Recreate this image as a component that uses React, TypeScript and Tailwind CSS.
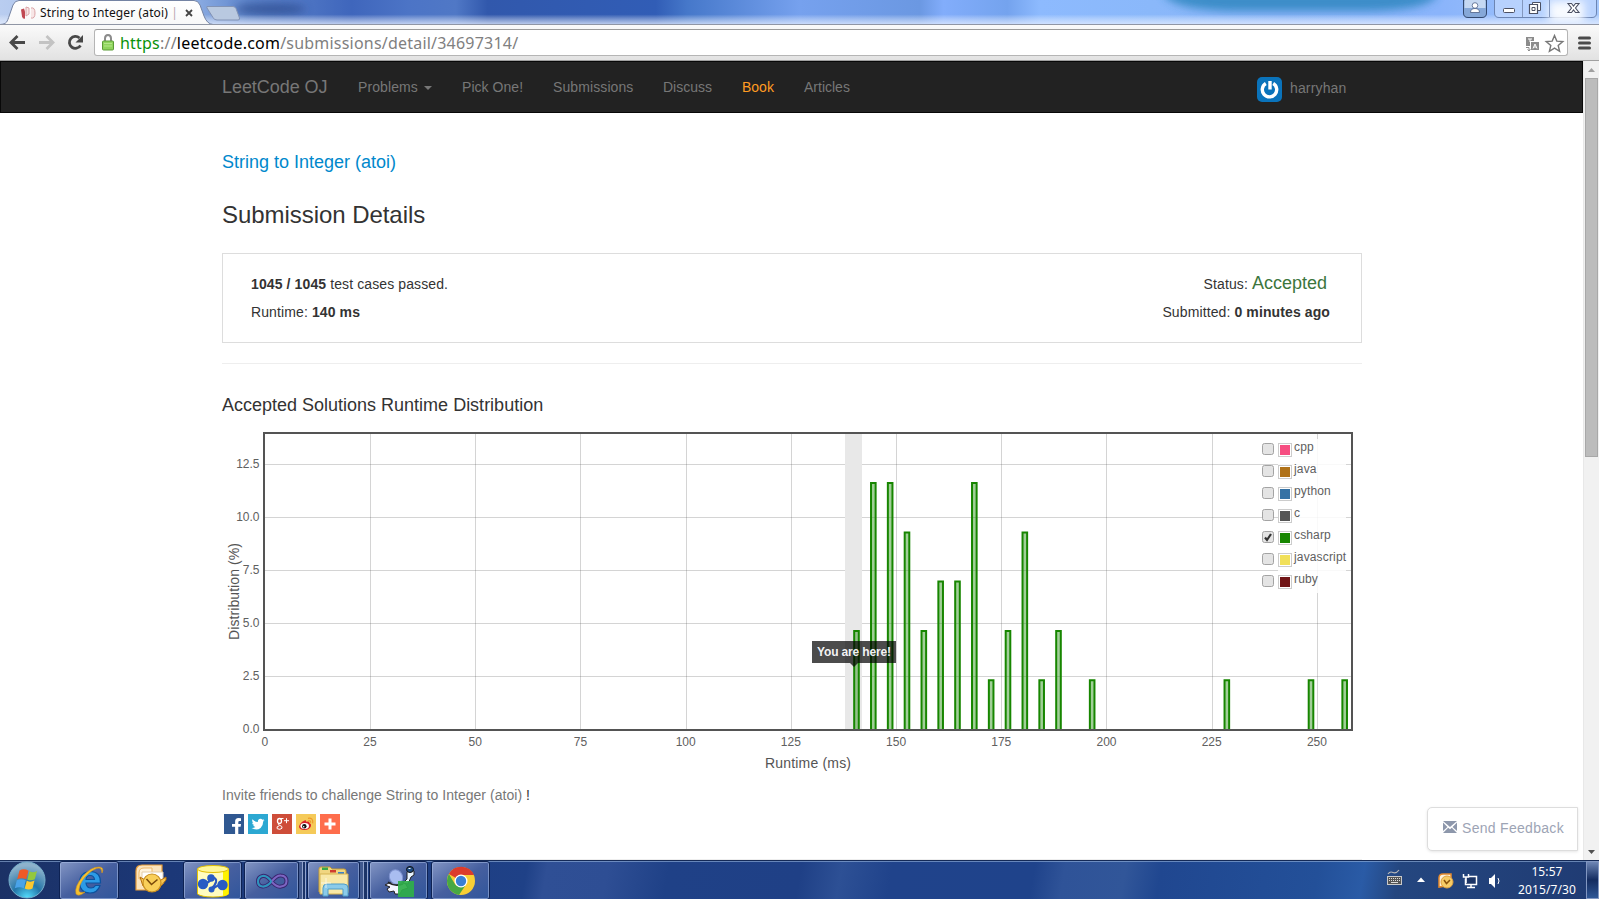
import React from 'react';

type Bar = [number, number];

const bars: Bar[] = [
  [140, 4.65], [144, 11.63], [148, 11.63], [152, 9.3], [156, 4.65], [160, 6.98], [164, 6.98],
  [168, 11.63], [172, 2.33], [176, 4.65], [180, 9.3], [184, 2.33], [188, 4.65], [196, 2.33],
  [228, 2.33], [248, 2.33], [256, 2.33],
];

const languages = [
  { name: 'cpp', color: '#f64e81' },
  { name: 'java', color: '#b07219' },
  { name: 'python', color: '#3572a5' },
  { name: 'c', color: '#555555' },
  { name: 'csharp', color: '#178600', checked: true },
  { name: 'javascript', color: '#f1e05a' },
  { name: 'ruby', color: '#701516' },
];

const xOf = (v: number) => 265.2 + v * 4.2085;
const yOf = (v: number) => 729.5 - v * 21.2;

function TabStrip() {
  return (
    <div className="relative h-6 w-full overflow-hidden bg-[#6f9be8]">
      <svg className="block" width="1599" height="24" viewBox="0 0 1599 24">
        <defs>
          <linearGradient id="glass" x1="0" x2="1" y1="0" y2="0">
            <stop offset="0" stopColor="#b9cdf0" />
            <stop offset="0.12" stopColor="#8fafe4" />
            <stop offset="0.155" stopColor="#5f86cc" />
            <stop offset="0.22" stopColor="#3f66bc" />
            <stop offset="0.255" stopColor="#4c74c6" />
            <stop offset="0.285" stopColor="#5078c6" />
            <stop offset="0.305" stopColor="#3158ac" />
            <stop offset="0.41" stopColor="#315db6" />
            <stop offset="0.43" stopColor="#4678ca" />
            <stop offset="0.5" stopColor="#76a1ee" />
            <stop offset="0.575" stopColor="#6b98e2" />
            <stop offset="0.59" stopColor="#82adfb" />
            <stop offset="0.63" stopColor="#74a3ee" />
            <stop offset="0.65" stopColor="#8dbafe" />
            <stop offset="0.72" stopColor="#8ab8fa" />
            <stop offset="0.8" stopColor="#88b2f8" />
            <stop offset="0.9" stopColor="#8ab4fb" />
            <stop offset="1" stopColor="#a6c8fc" />
          </linearGradient>
          <linearGradient id="haze" x1="0" x2="0" y1="0" y2="1">
            <stop offset="0.6" stopColor="#fff" stopOpacity="0" />
            <stop offset="1" stopColor="#e4edff" stopOpacity="0.75" />
          </linearGradient>
          <linearGradient id="tab" x1="0" x2="0" y1="0" y2="1">
            <stop offset="0" stopColor="#fff" />
            <stop offset="1" stopColor="#f8f8f8" />
          </linearGradient>
          <filter id="soft" x="-20%" y="-60%" width="140%" height="220%"><feGaussianBlur stdDeviation="4" /></filter>
        </defs>
        <rect width="1599" height="24" fill="url(#glass)" />
        <ellipse cx="270" cy="9" rx="36" ry="6" fill="#2c4a8c" opacity="0.7" filter="url(#soft)" />
        <path d="M1162 -8H1438Q1436 12 1350 11H1250Q1170 12 1162 -8Z" fill="#2f86c0" opacity="0.85" filter="url(#soft)" />
        <rect width="1599" height="24" fill="url(#haze)" />
        <path d="M207 6.500H233q2 0 3 2l3.500 9.500q.5 2-1.500 2H217q-3 0-4-2.500L207 8q-.5-1.500 0-1.500Z" fill="#b9c9e0" stroke="#8293b5" />
        <path d="M0 24.500C7 24 7 22 9.500 15L13 5Q15 .5 19 .5H194Q198 .5 200 5L204 16Q207 24 213 24.500Z" fill="url(#tab)" stroke="#7483a3" />
        <path d="M21 9.500l3-1 1 3v7q-2 1-3-2z" fill="#c14852" />
        <path d="M26 7l3 1v6l-3 2zM31 8q4-1 4 5t-4 5" fill="#f7e6e6" stroke="#dba4a8" />
        <path d="M186 10l6 6M192 10l-6 6" stroke="#444" strokeWidth="1.800" />
        {/* profile and window buttons */}
        <path d="M1463.500 0v13q0 4.500 4.500 4.500h14q4.500 0 4.500-4.500V0Z" fill="#86a8d8" stroke="#33496f" />
        <path d="M1464.500 0v8h21V0Z" fill="#c5d8f2" />
        <circle cx="1475" cy="5.500" r="2.800" fill="#fff" stroke="#4b5f86" strokeWidth=".8" />
        <path d="M1470.500 12.500q0-4 4.500-4t4.500 4z" fill="#fff" stroke="#4b5f86" strokeWidth=".8" />
        <path d="M1494.500 0v13q0 4.500 4.500 4.500h93q4.500 0 4.500-4.500V0" fill="#c4daff" fillOpacity=".7" stroke="#6c85b3" />
        <rect x="1549" y="1" width="35" height="21" fill="#fff" opacity=".9" filter="url(#soft)" />
        <path d="M1522.500 0v17M1549.500 0v17" stroke="#8397bd" />
        <rect x="1503.500" y="8.500" width="11" height="4" rx="1" fill="#fff" stroke="#4b5063" />
        <path d="M1532.500 2.500h8v8h-8z" fill="#fff" stroke="#4b5063" />
        <path d="M1529.500 4.500h8v9h-8z" fill="#fff" stroke="#4b5063" strokeWidth="1.200" />
        <path d="M1532 7.500h3v3h-3z" fill="none" stroke="#4b5063" />
        <path d="M1568 3.500h3.500l2 2.500 2-2.500h3.500l-3.500 4.500 3.500 4.500h-3.500l-2-2.500-2 2.500H1568l3.500-4.500z" fill="#fff" stroke="#4b5063" strokeWidth="1.100" />
      </svg>
      <span className="absolute left-10 top-[4px] whitespace-nowrap font-['Noto_Sans'] text-[12px] leading-[18px] tracking-[0.12px] text-[#111]">
        String to Integer (atoi) <span className="text-[#b9a3b0]">|</span>
      </span>
    </div>
  );
}

function Toolbar() {
  return (
    <div className="flex h-[37px] items-center border-b border-t border-b-[#a0a0a0] border-t-[#9096a5] bg-gradient-to-b from-[#fafafa] to-[#e2e2e2]">
      <svg className="shrink-0" width="94" height="35" viewBox="0 25 94 35">
        <path d="M25 42.500H11.500M17.500 36l-6.500 6.500 6.500 6.500" fill="none" stroke="#484848" strokeWidth="2.800" />
        <path d="M39 42.500h13.500M46.500 36l6.500 6.500-6.500 6.500" fill="none" stroke="#c3c3c3" strokeWidth="2.800" />
        <path d="M80.500 45.500A6 6 0 1 1 79.500 38" fill="none" stroke="#484848" strokeWidth="2.800" />
        <path d="M83 35v7.500h-7.500z" fill="#484848" />
      </svg>
      <div className="flex h-[27px] w-[1474px] items-center rounded-[3px] border border-[#b5b5b5] border-t-[#9b9b9b] bg-white pr-[2px]">
        <svg className="ml-[6px] shrink-0" width="14" height="19" viewBox="0 0 14 19">
          <path d="M4 9V5.500Q4 2 7 2t3 3.500V9" fill="none" stroke="#8b8b8b" strokeWidth="2" />
          <rect x="1.500" y="8" width="11" height="9" rx="1" fill="#8ed45c" stroke="#5a9b37" />
          <path d="M3 10.500h8M3 13h8" stroke="#b3e68a" />
        </svg>
        <span className="ml-[5px] flex-1 whitespace-nowrap font-['Noto_Sans'] text-[16px] leading-6 tracking-[0.21px] text-[#808080]">
          <span className="text-[#0a920a]">https</span>://<span className="text-black">leetcode.com</span>/submissions/detail/34697314/
        </span>
        <svg className="shrink-0" width="42" height="24" viewBox="1523 30 42 24">
          <path d="M1526 36h8v4h-4v5h-4z" fill="#8b8b8b" />
          <path d="M1528 38h4M1530 38v3" stroke="#fff" />
          <rect x="1531" y="41" width="8" height="8" fill="#8b8b8b" />
          <path d="M1533 47.500l2-4.500 2 4.500M1534 46h2" fill="none" stroke="#fff" />
          <path d="M1526 46.500h3v3M1527.500 48.500l1.500 1.500 1.500-2" fill="none" stroke="#8b8b8b" />
          <path d="M1554.500 34.500l2.300 5.600 6 .4-4.600 3.900 1.400 5.900-5.100-3.200-5.100 3.200 1.400-5.900-4.600-3.900 6-.4z" fill="#fff" stroke="#777" strokeWidth="1.400" />
        </svg>
      </div>
      <svg className="ml-[9px]" width="16" height="16" viewBox="0 0 16 16">
        <path d="M2.500 3h10M2.500 8h10M2.500 13h10" stroke="#4a4a4a" strokeWidth="3" strokeLinecap="round" />
      </svg>
    </div>
  );
}

function NavBar() {
  return (
    <nav className="flex h-[52px] items-center border border-[#080808] bg-[#222] pl-[221px] text-[14px] leading-5 text-[#777]">
      <span className="w-[136px] text-[18px] tracking-[-0.06px]">LeetCode OJ</span>
      <span className="flex w-[104px] items-center tracking-[0.1px]">
        Problems
        <svg className="ml-[6px] mt-px" width="8" height="4" viewBox="0 0 8 4"><path d="M0 0h8L4 4z" fill="#777" /></svg>
      </span>
      <span className="w-[91px] tracking-[0.05px]">Pick One!</span>
      <span className="w-[110px] tracking-[0.1px]">Submissions</span>
      <span className="w-[79px]">Discuss</span>
      <span className="w-[62px] text-[#ff9b22]">Book</span>
      <span className="w-[453px]">Articles</span>
      <svg className="mt-[4px]" width="25" height="25" viewBox="0 0 25 25">
        <rect width="25" height="25" rx="5" fill="#0a73bb" />
        <path d="M8.800 6.500A7.200 7.200 0 1 0 16.200 6.500" fill="none" stroke="#fff" strokeWidth="3.400" />
        <path d="M13 4v8.500" stroke="#fff" strokeWidth="3.400" />
      </svg>
      <span className="ml-2 mt-[2px] tracking-[0.15px]">harryhan</span>
    </nav>
  );
}

function Chart() {
  const vertical = [25, 50, 75, 100, 125, 150, 175, 200, 225, 250];
  const horizontal = [2.5, 5, 7.5, 10, 12.5];
  return (
    <svg className="block font-['Liberation_Sans']" width="1140" height="355" viewBox="222 424 1140 355">
      {vertical.map((v) => (
        <path key={v} d={`M${Math.floor(xOf(v)) + 0.5} 434V729`} stroke="#545454" strokeOpacity="0.25" />
      ))}
      {horizontal.map((v) => (
        <path key={v} d={`M265 ${yOf(v)}H1351`} stroke="#545454" strokeOpacity="0.25" />
      ))}
      <rect x="845" y="434" width="17" height="295" fill="#e8e8e8" />
      {bars.map(([ms, pct]) => (
        <path
          key={ms}
          d={`M${xOf(ms) - 0.2} 729V${yOf(pct) + 0.1}h4.600V729`}
          fill="#178600"
          fillOpacity="0.4"
          stroke="#178600"
          strokeWidth="2"
        />
      ))}
      <rect x="264" y="433" width="1088" height="297" fill="none" stroke="#545454" strokeWidth="2" />
      <rect x="1278" y="439" width="68" height="154" fill="#fff" fillOpacity="0.85" />
      <g fill="#606060" fontSize="12">
        {horizontal.concat(0).map((v) => (
          <text key={v} x="259.5" y={yOf(v) + 3.5} textAnchor="end">{v.toFixed(1)}</text>
        ))}
        {[0, ...vertical].map((v) => (
          <text key={v} x={xOf(v) - 0.4} y="746" textAnchor="middle">{v}</text>
        ))}
        <text x="808" y="768" fill="#545454" fontSize="14" textAnchor="middle" textLength="86">Runtime (ms)</text>
        <text transform="translate(239 591.500) rotate(-90)" fill="#545454" fontSize="14" textAnchor="middle" textLength="97">Distribution (%)</text>
        {languages.map((l, i) => {
          const y = 443 + i * 22;
          return (
            <g key={l.name}>
              <rect x="1262.500" y={y + 0.5} width="11" height="11" rx="2" fill="#e4e4e4" stroke="#a3a3a3" />
              {l.checked && <path d={`M1265 ${y + 6.5}l2 2.500 4-6`} fill="none" stroke="#333" strokeWidth="2.200" />}
              <rect x="1278.500" y={y + 0.5} width="13" height="13" fill="#fff" stroke="#ccc" />
              <rect x="1280" y={y + 2} width="10" height="10" fill={l.color} />
              <text x="1294" y={y + 8} letterSpacing="0.15">{l.name}</text>
            </g>
          );
        })}
      </g>
      <path d="M812 641H896V663H858L854 667L850 663H812Z" fill="#000" fillOpacity="0.7" />
      <text x="817" y="656" fill="#fff" fillOpacity=".95" fontSize="12" fontWeight="bold" textLength="74">You are here!</text>
    </svg>
  );
}

function ShareIcons() {
  return (
    <div className="mt-[9px] flex gap-1 pl-[2px]">
      <svg width="20" height="20" viewBox="0 0 20 20">
        <rect width="20" height="20" fill="#305891" />
        <path d="M17 4.200V7h-1.500q-1.200 0-1.200 1.200V10H17l-.4 2.800h-2.300V20h-3.200v-7.200H8V10h3.100V7.700Q11.100 4 14.500 4q1.500 0 2.500.2z" fill="#fff" />
      </svg>
      <svg width="20" height="20" viewBox="0 0 20 20">
        <rect width="20" height="20" fill="#2ca8d2" />
        <path d="M16.500 6.100q-.7.300-1.500.4.800-.5 1.100-1.400-.8.500-1.600.6a2.600 2.600 0 0 0-4.500 2.400Q6.600 7.800 4.500 5.300q-1 2.200.8 3.500-.6 0-1.200-.3 0 2 2.100 2.600-.6.100-1.200 0 .5 1.600 2.400 1.800Q5.700 14.200 3.500 14q5 2.900 9.100-.1 2.600-2.200 2.600-6.300.8-.6 1.300-1.500z" fill="#fff" />
      </svg>
      <svg width="20" height="20" viewBox="0 0 20 20">
        <rect width="20" height="20" fill="#ce4d39" />
        <ellipse cx="7.500" cy="7" rx="2" ry="2.500" fill="none" stroke="#fff" strokeWidth="1.300" />
        <path d="M8 4.500h3.500M7.200 9.500q-1.700 1 .2 1.700 3.400.9 2.600 3-1.800 2-4.800.5-1.200-2.200 2.200-3M12 6.700h5M14.500 4.200v5" fill="none" stroke="#fff" strokeWidth="1" />
      </svg>
      <svg width="20" height="20" viewBox="0 0 20 20">
        <rect width="20" height="20" fill="#f5ca59" />
        <path d="M8.500 6.500q2-.6 1.600 1.200 4-1 3.300 1.400 2.200.9 1.600 3-1.300 3.900-6.600 3.900-5.200-.2-5.400-3.300.6-3.800 5.500-6.200z" fill="#d82028" />
        <ellipse cx="8.700" cy="12" rx="4.300" ry="3" fill="#fff" />
        <circle cx="8.300" cy="12.200" r="2.200" fill="#111" /><circle cx="7.700" cy="12.700" r=".8" fill="#fff" />
        <path d="M12 4.300q5.500-.7 4.700 5M12.300 6.600q2.600-.3 2.300 2.200" fill="none" stroke="#ee9a2b" strokeWidth="1.200" />
      </svg>
      <svg width="20" height="20" viewBox="0 0 20 20">
        <rect width="20" height="20" fill="#fe6d4c" />
        <path d="M10 4.500v11M4.500 10h11" stroke="#fff" strokeWidth="3" />
      </svg>
    </div>
  );
}

function PageBody() {
  return (
    <main className="ml-[222px] flex w-[1140px] flex-col text-[14px] leading-5 text-[#333]">
      <h4 className="mt-[39px] text-[18px] leading-5 text-[#0088cc]">String to Integer (atoi)</h4>
      <h3 className="mt-[29px] text-[24px] leading-[28px] tracking-[-0.05px]">Submission Details</h3>
      <section className="mt-[24px] flex h-[90px] justify-between border border-[#ddd] pl-7 pr-[31px] pt-[16px] leading-7 tracking-[0.11px]">
        <div>
          <p><b>1045 / 1045</b> test cases passed.</p>
          <p>Runtime: <b>140 ms</b></p>
        </div>
        <div className="text-right">
          <p className="mr-[3px] mt-[-1px] flex h-[29px] items-baseline justify-end">Status:&nbsp;<span className="text-[18px] tracking-normal text-[#3c763d]">Accepted</span></p>
          <p>Submitted: <b>0 minutes ago</b></p>
        </div>
      </section>
      <hr className="mt-5 border-[#eee]" />
      <h4 className="mb-[9px] mt-[31px] text-[18px] leading-5">Accepted Solutions Runtime Distribution</h4>
      <Chart />
      <p className="mt-[6px] tracking-[0.04px] text-[#777]">Invite friends to challenge String to Integer (atoi) <span className="text-[#333]">!</span></p>
      <ShareIcons />
      <hr className="mt-[25px] border-[#eee]" />
    </main>
  );
}

function ScrollBar() {
  return (
    <div className="flex w-4 flex-col items-center border-l border-[#e8e8e8] bg-[#f1f1f1]">
      <svg width="15" height="17" viewBox="0 0 15 17"><path d="M4 11h7L7.500 7z" fill="#a0a0a0" /></svg>
      <div className="h-[379px] w-[13px] border border-[#a8a8a8] bg-[#bcbcbc]" />
      <div className="flex-1" />
      <svg width="15" height="17" viewBox="0 0 15 17"><path d="M4 7h7l-3.500 4z" fill="#505050" /></svg>
    </div>
  );
}

function TaskButton({ className, children }: { className: string; children: React.ReactNode }) {
  return (
    <div className={`flex h-[39px] shrink-0 items-center justify-center rounded-[3px] border border-[#0e2253] bg-gradient-to-br from-[#8496c4] via-[#465f9f] to-[#30569c] shadow-[inset_0_0_0_1px_rgba(170,190,230,0.55)] ${className}`}>
      {children}
    </div>
  );
}

function OutlookIcon() {
  return (
    <svg width="32" height="30" viewBox="0 0 32 30">
      <path d="M1 26V7q0-6 6-6h20v18l-4 7z" fill="#fbe4bd" stroke="#e59a35" strokeWidth="1.200" />
      <path d="M4 15V9q0-5 5-5h8v7z" fill="#fff3dc" stroke="#f0b765" />
      <path d="M7 8h21v12H7z" fill="#fff" stroke="#e3cda9" />
      <path d="M5 13l5 3 8 6 8-6 5-3v3l-5 6H8z" fill="#f5c451" stroke="#b8720e" />
      <circle cx="17" cy="19" r="9" fill="#f9cf59" stroke="#c98f20" strokeWidth="1.200" />
      <path d="M11.500 15l5 5.500 6-5" fill="none" stroke="#7a4a0a" strokeWidth="1.600" />
    </svg>
  );
}

function TaskBar() {
  return (
    <footer className="relative flex h-[39px] items-start border-t border-[#142a57] bg-[linear-gradient(100deg,#1b3165_0,#1c3878_170px,#1f4187_520px,#2f4f95_540px,#2e4e94_600px,#1f4187_660px,#1f4086_790px,#2d5095_830px,#20438b_880px,#1f438b_1020px,#2f5398_1050px,#315699_1110px,#204790_1145px,#235099_1300px,#2a5ba6_1345px,#24467f_1380px,#1f3a72_1599px)] font-['Noto_Sans'] text-white shadow-[inset_0_1px_0_rgba(150,180,220,0.6)]">
      <svg className="ml-[7px] shrink-0" width="40" height="38" viewBox="7 861 40 38">
        <defs>
          <radialGradient id="orb" cx=".5" cy="1" r=".9"><stop offset="0" stopColor="#55e0ff" /><stop offset=".45" stopColor="#2375a8" /><stop offset="1" stopColor="#8db2cc" /></radialGradient>
        </defs>
        <circle cx="27" cy="880" r="18" fill="url(#orb)" stroke="#75aecb" />
        <path d="M19.500 870.500q4.500-2.500 9 .3l-2.300 8.400q-4.500-2-9 0z" fill="#ee5a27" />
        <path d="M29.500 871.300q4 2 7.500-.3l-2.200 8.300q-4 2-7.500.2z" fill="#93c83d" />
        <path d="M16.800 880.300q4.500-2 9 0l-2 8q-4.500-2-9 0z" fill="#4aa3e8" />
        <path d="M26.800 880.800q4 1.800 7.700-.2l-2 8q-4 2-7.800-.2z" fill="#fdc82f" />
      </svg>
      <TaskButton className="ml-[12px] w-[60px]">
        <svg width="34" height="34" viewBox="0 0 34 34">
          <path d="M28.500 19H14q.5 5 5 5 3 0 4.500-2.500H28q-2.500 7.500-10 7.500-10 0-10.500-10.500Q8 8 18.500 7.500 29 8 28.500 19zM14 15.500h8.500Q22 11.500 18.200 11.500T14 15.500z" fill="#2c9be6" stroke="#0c529e" strokeWidth="1.200" />
          <path d="M30 9q2.500-6-3-6Q19 3 11 12 2 23 4 30q3 3 9-2-7 2-6-3Q8 17 17 9q9-7 12-4 .8 1.200 1 4z" fill="#f5c12f" stroke="#dc9716" strokeWidth=".6" />
        </svg>
      </TaskButton>
      <div className="flex h-[36px] w-[64px] shrink-0 items-center justify-center"><OutlookIcon /></div>
      <TaskButton className="w-[59px]">
        <svg width="34" height="34" viewBox="0 0 34 34">
          <path d="M1.500 5h31v25q-4 3-15.500 3T1.500 30z" fill="#fffcc0" stroke="#e5c200" />
          <path d="M27 5h5.500v25q-2 2-5.500 2z" fill="#fff200" />
          <ellipse cx="17" cy="5" rx="15.500" ry="3.500" fill="#fff799" stroke="#dfbd00" />
          <path d="M7 20q6-1 8-5M15 14q6-1 5 4-1 4-5 7M17 25q4-4 10-5" fill="none" stroke="#2b58c0" strokeWidth="2.200" />
          <circle cx="7" cy="20" r="5.200" fill="#285cc4" /><circle cx="15" cy="14" r="3.800" fill="#285cc4" />
          <circle cx="26.500" cy="21" r="5.200" fill="#285cc4" /><circle cx="15.500" cy="25.500" r="3" fill="#285cc4" />
        </svg>
      </TaskButton>
      <TaskButton className="ml-[2px] w-[55px]">
        <svg width="34" height="34" viewBox="0 0 34 34">
          <path d="M17 18Q12 11 7.500 12 3 13 3 17.500t4.500 5Q12 23 17 17t9-5.500q5.500.5 5.500 5.500T26 22.500q-4 1-9-4.500z" fill="none" stroke="#39256e" strokeWidth="4" />
          <path d="M17 18Q12 11 7.500 12 3 13 3 17.500t4.500 5Q12 23 17 17" fill="none" stroke="#2f93bd" strokeWidth="2.200" />
          <path d="M17 17q5-6 9-5.500 5.500.5 5.500 5.500T26 22.500q-4 1-9-4.500" fill="none" stroke="#7d66c2" strokeWidth="2" />
        </svg>
      </TaskButton>
      <div className="h-[39px] w-1 shrink-0 border-r border-t border-[#91a3cd] bg-[#41598f]" />
      <div className="h-[39px] w-[3px] shrink-0 border-r border-t border-[#91a3cd] bg-[#1c3468]" />
      <TaskButton className="ml-px w-[53px]">
        <svg width="34" height="34" viewBox="0 0 34 34">
          <path d="M2 5q0-2 2-2h9l2 2h12q2 0 2 2v21H2z" fill="#f0d681" stroke="#c79d35" />
          <path d="M5 3.500h6v2.500H5z" fill="#39a84a" /><path d="M13 6h6v2.500h-6z" fill="#d13d2f" /><path d="M21 8h6v2.500h-6z" fill="#3b83c9" />
          <path d="M3 10h28v18q0 2-2 2H3z" fill="#f8e8a7" stroke="#d6b452" />
          <path d="M6 32V24q0-4 4-4h17q4 0 4 4v8h-5v-7H11v7z" fill="#8bcbea" stroke="#4f9dc9" />
          <path d="M9 14v10M4 19h10" stroke="#fff" strokeWidth=".8" opacity=".8" />
        </svg>
      </TaskButton>
      <div className="h-[39px] w-1 shrink-0 border-r border-t border-[#91a3cd] bg-[#41598f]" />
      <div className="h-[39px] w-1 shrink-0 border-r border-t border-[#91a3cd] bg-[#1c3468]" />
      <TaskButton className="ml-px w-[59px]">
        <svg width="36" height="34" viewBox="0 0 36 34">
          <path d="M4 21l4-2h16l3 5-6 2-2 4h-5l-1-3-5 1-2-3 3-2z" fill="#f4f4ff" stroke="#222" />
          <path d="M22 19l4-4V8l3-3 4 2v4l-3 2-3 7z" fill="#e9f5ff" stroke="#222" />
          <ellipse cx="15" cy="13" rx="6.500" ry="7.500" transform="rotate(-25 15 13)" fill="#a9bdf0" stroke="#7f93cf" />
          <path d="M7 18q6 5 15 2" fill="none" stroke="#222" strokeWidth="1.500" />
          <ellipse cx="29" cy="5.500" rx="3.500" ry="3" fill="#1d4b80" stroke="#111" />
          <path d="M27.500 4.500h2" stroke="#fff" />
          <rect x="17" y="17" width="16" height="16" fill="#2fae4a" fillOpacity=".93" />
        </svg>
      </TaskButton>
      <TaskButton className="ml-[3px] w-[59px]">
        <svg width="30" height="30" viewBox="0 0 30 30">
          <circle cx="15" cy="15" r="14" fill="#f9cf35" />
          <path d="M15 15L2.900 8A14 14 0 0 1 28 9H15z" fill="#dc3b2c" />
          <path d="M2.900 8L9.500 19 15 15 19 20 13 28.900A14 14 0 0 1 2.900 8Z" fill="#47a843" />
          <circle cx="15" cy="15" r="6.500" fill="#fff" /><circle cx="15" cy="15" r="5.200" fill="#3a7fd4" />
        </svg>
      </TaskButton>
      <div className="flex-1" />
      <svg className="shrink-0" width="124" height="38" viewBox="1384 861 124 38">
        <path d="M1388 874q2-3 5-1.500t6-2.500" fill="none" stroke="#b8b8b8" strokeWidth="1.200" />
        <rect x="1387.500" y="876.500" width="14" height="8" fill="#555" stroke="#c9c9c9" />
        <path d="M1389 878.500h11M1389 880.500h11" stroke="#ddd" strokeDasharray="1 1" /><path d="M1391 882.500h7" stroke="#ddd" />
        <path d="M1417 882h8l-4-4.500z" fill="#fff" />
        <path d="M1439 887v-9q0-4 4-4h8v11z" fill="#fff3dc" stroke="#e68a2b" strokeWidth="1.500" />
        <circle cx="1447" cy="882" r="6" fill="#f7cc66" stroke="#dda040" /><path d="M1444 880l2.500 3.500 3.500-3.500" fill="none" stroke="#8a520a" strokeWidth="1.500" />
        <path d="M1468.500 876.500h8v8h-11v-6" fill="#1c3566" stroke="#fff" strokeWidth="1.500" /><path d="M1467 887.500h8M1471 885v2M1463.500 874v3h5v-3M1466 877v6" fill="none" stroke="#fff" strokeWidth="1.500" />
        <path d="M1489 878h2l4-4v14l-4-4h-2z" fill="#fff" /><path d="M1498 878q2 3 0 6" fill="none" stroke="#fff" />
      </svg>
      <div className="w-[78px] shrink-0 text-center text-[12px] leading-[18px] tracking-[0.1px]"><div className="pt-[2px]">15:57</div><div>2015/7/30</div></div>
      <div className="h-[38px] w-[13px] shrink-0 border border-[#8297c2] bg-gradient-to-b from-[#6e86b5] via-[#142c60] to-[#2f5796]" />
    </footer>
  );
}

export default function App() {
  return (
    <div className="flex h-[899px] w-[1599px] flex-col overflow-hidden bg-white font-['Liberation_Sans',sans-serif]">
      <TabStrip />
      <Toolbar />
      <div className="relative flex h-[799px]">
        <div className="w-[1583px] overflow-hidden">
          <NavBar />
          <PageBody />
        </div>
        <ScrollBar />
        <div className="absolute left-[1427px] top-[746px] flex h-[44px] w-[151px] items-center whitespace-nowrap rounded-l-[5px] border border-[#ddd] bg-white pb-[2px] pl-[15px] text-[14px] tracking-[0.3px] text-[#9da4b5] shadow-[0_1px_3px_rgba(0,0,0,0.1)]">
          <svg className="mr-[5px] mt-[-2px]" width="14" height="12" viewBox="0 0 14 12">
            <path d="M0 0h14L7 6zM0 1.500L4.500 6 0 10zM14 1.500L9.500 6l4.500 4zM0 12l5.200-5.200L7 8.200l1.800-1.400L14 12z" fill="#8d97ab" />
          </svg>
          Send Feedback
        </div>
      </div>
      <TaskBar />
    </div>
  );
}
